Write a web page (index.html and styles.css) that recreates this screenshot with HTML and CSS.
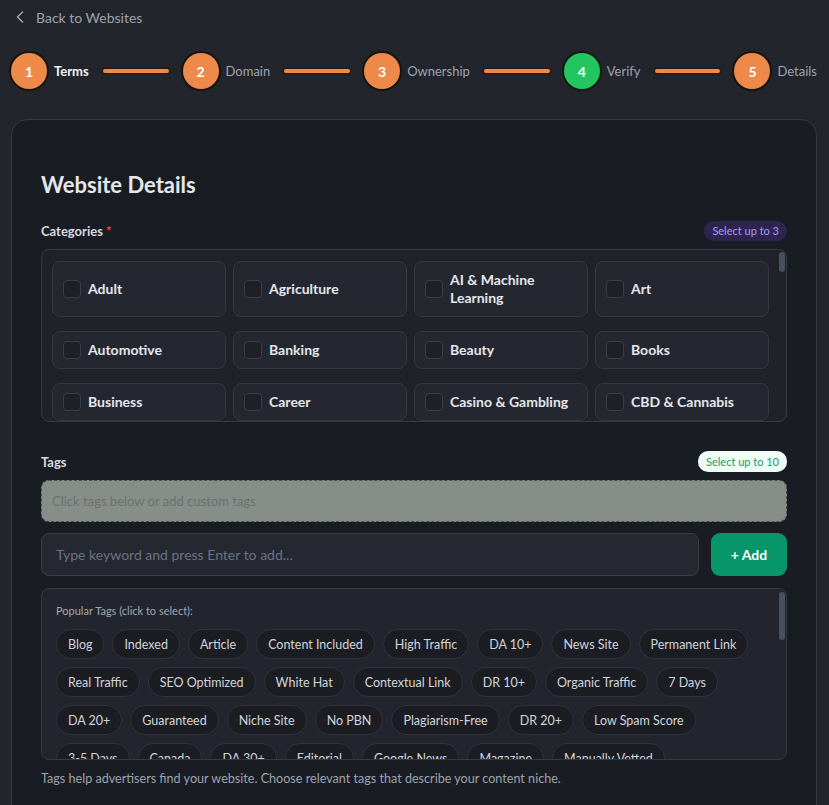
FILE: index.html
```html
<!DOCTYPE html>
<html lang="en">
<head>
    <meta charset="UTF-8">
    <meta name="viewport" content="width=device-width, initial-scale=1.0">
    <title>Website Details</title>
    <link rel="stylesheet" href="styles.css">
</head>
<body>
    <div class="page">
        <a class="back" href="#">
            <svg width="8" height="12" viewBox="0 0 8 12"><polyline points="6.5,1 1.5,6 6.5,11" fill="none" stroke="#9ca3af" stroke-width="1.6" stroke-linecap="round" stroke-linejoin="round"/></svg>
            <span>Back to Websites</span>
        </a>

        <div class="stepper">
            <div class="step active"><span class="dot">1</span><span class="label">Terms</span></div>
            <div class="line"></div>
            <div class="step"><span class="dot">2</span><span class="label">Domain</span></div>
            <div class="line"></div>
            <div class="step"><span class="dot">3</span><span class="label">Ownership</span></div>
            <div class="line"></div>
            <div class="step"><span class="dot green">4</span><span class="label">Verify</span></div>
            <div class="line"></div>
            <div class="step"><span class="dot">5</span><span class="label">Details</span></div>
        </div>

        <div class="card">
            <h1>Website Details</h1>

            <div class="field-head">
                <label>Categories <span class="req">*</span></label>
                <span class="badge purple">Select up to 3</span>
            </div>
            <div class="cat-box">
                <div class="cat-grid">
                    <label class="cat"><span class="check"></span>Adult</label>
                    <label class="cat"><span class="check"></span>Agriculture</label>
                    <label class="cat"><span class="check"></span>AI &amp; Machine Learning</label>
                    <label class="cat"><span class="check"></span>Art</label>
                    <label class="cat"><span class="check"></span>Automotive</label>
                    <label class="cat"><span class="check"></span>Banking</label>
                    <label class="cat"><span class="check"></span>Beauty</label>
                    <label class="cat"><span class="check"></span>Books</label>
                    <label class="cat"><span class="check"></span>Business</label>
                    <label class="cat"><span class="check"></span>Career</label>
                    <label class="cat"><span class="check"></span>Casino &amp; Gambling</label>
                    <label class="cat"><span class="check"></span>CBD &amp; Cannabis</label>
                    <label class="cat"><span class="check"></span>Education</label>
                    <label class="cat"><span class="check"></span>Entertainment</label>
                    <label class="cat"><span class="check"></span>Fashion</label>
                    <label class="cat"><span class="check"></span>Finance</label>
                </div>
                <div class="thumb cat-thumb"></div>
            </div>

            <div class="field-head tags-head">
                <label>Tags</label>
                <span class="badge green">Select up to 10</span>
            </div>
            <div class="drop">Click tags below or add custom tags</div>
            <div class="add-row">
                <input type="text" placeholder="Type keyword and press Enter to add...">
                <button>+ Add</button>
            </div>
            <div class="popular">
                <p class="pop-title">Popular Tags (click to select):</p>
                <div class="chips">
                    <span class="chip">Blog</span>
                    <span class="chip">Indexed</span>
                    <span class="chip">Article</span>
                    <span class="chip">Content Included</span>
                    <span class="chip">High Traffic</span>
                    <span class="chip">DA 10+</span>
                    <span class="chip">News Site</span>
                    <span class="chip">Permanent Link</span>
                    <span class="chip">Real Traffic</span>
                    <span class="chip">SEO Optimized</span>
                    <span class="chip">White Hat</span>
                    <span class="chip">Contextual Link</span>
                    <span class="chip">DR 10+</span>
                    <span class="chip">Organic Traffic</span>
                    <span class="chip">7 Days</span>
                    <span class="chip">DA 20+</span>
                    <span class="chip">Guaranteed</span>
                    <span class="chip">Niche Site</span>
                    <span class="chip">No PBN</span>
                    <span class="chip">Plagiarism-Free</span>
                    <span class="chip">DR 20+</span>
                    <span class="chip">Low Spam Score</span>
                    <span class="chip">3-5 Days</span>
                    <span class="chip">Canada</span>
                    <span class="chip">DA 30+</span>
                    <span class="chip">Editorial</span>
                    <span class="chip">Google News</span>
                    <span class="chip">Magazine</span>
                    <span class="chip">Manually Vetted</span>
                </div>
                <div class="thumb pop-thumb"></div>
            </div>
            <p class="help">Tags help advertisers find your website. Choose relevant tags that describe your content niche.</p>
        </div>
    </div>
</body>
</html>
```

FILE: styles.css
```css
* {
    box-sizing: border-box;
}
body {
    margin: 0;
    background-color: #22252c;
    font-family: Lato, "Open Sans", sans-serif;
    color: #e5e7eb;
}
.page {
    padding: 7px 12px 0 11px;
    height: 805px;
    overflow: hidden;
}

/* back link */
.back {
    display: flex;
    align-items: center;
    gap: 12px;
    height: 20px;
    padding-left: 5px;
    color: #9ca3af;
    font-size: 14px;
    text-decoration: none;
}

/* stepper */
.stepper {
    display: flex;
    align-items: center;
    margin-top: 26px;
}
.step {
    display: flex;
    align-items: center;
    gap: 7px;
}
.dot {
    width: 36px;
    height: 36px;
    border-radius: 50%;
    display: flex;
    justify-content: center;
    align-items: center;
    background-color: #ed8a4a;
    color: #fff;
    font-size: 14px;
    font-weight: 700;
    box-shadow: 0 0 0 2px #17130f;
}
.dot.green {
    background-color: #22c55e;
    box-shadow: 0 0 0 2px #0f1a13;
}
.step .label {
    font-size: 13px;
    color: #9ca3af;
}
.step.active .label {
    color: #f3f4f6;
    font-weight: 700;
}
.line {
    flex: 1;
    height: 4px;
    margin: 0 14px;
    border-radius: 2px;
    background-color: #ed8a4a;
    box-shadow: 0 0 0 2px #2a1c12;
}

/* card */
.card {
    margin-top: 30px;
    padding: 51px 29px 60px;
    background-color: #1a1c23;
    border: 1px solid #363941;
    border-radius: 16px;
}
.card h1 {
    margin: 0;
    font-size: 22px;
    line-height: 28px;
    font-weight: 700;
    color: #e5e7eb;
}
.field-head {
    display: flex;
    justify-content: space-between;
    align-items: center;
    margin-top: 22px;
    height: 20px;
}
.field-head label {
    font-size: 13px;
    font-weight: 700;
    color: #d7dae0;
}
.req {
    color: #ef4444;
}
.badge {
    font-size: 11px;
    line-height: 20px;
    padding: 0 8px;
    border-radius: 10px;
}
.badge.purple {
    background-color: #2d2550;
    color: #a99af5;
}
.badge.green {
    background-color: #f0fdf6;
    color: #139c70;
    line-height: 21px;
}

/* categories */
.cat-box {
    position: relative;
    margin-top: 8px;
    height: 173px;
    padding: 11px 0 0 10px;
    overflow: hidden;
    background-color: #1f2229;
    border: 1px solid #363941;
    border-radius: 8px;
}
.cat-grid {
    display: grid;
    grid-template-columns: repeat(4, 174px);
    column-gap: 7px;
    row-gap: 14px;
}
.cat {
    display: flex;
    align-items: center;
    gap: 7px;
    min-height: 38px;
    padding: 9px 10px;
    background-color: #242730;
    border: 1px solid #353841;
    border-radius: 8px;
    font-size: 14px;
    line-height: 18px;
    font-weight: 700;
    color: #e5e7eb;
}
.check {
    flex: none;
    width: 18px;
    height: 18px;
    border: 1px solid #3a3e47;
    border-radius: 4px;
    background-color: #1d2027;
}
.thumb {
    position: absolute;
    right: 1px;
    width: 6px;
    border-radius: 3px;
    background-color: #4a4f5c;
}
.cat-thumb {
    top: 2px;
    height: 20px;
}

/* tags */
.tags-head {
    margin-top: 29px;
    height: 21px;
}
.drop {
    margin-top: 8px;
    height: 42px;
    padding: 0 10px;
    display: flex;
    align-items: center;
    background-color: #878d89;
    border: 1px dashed #4d524f;
    border-radius: 8px;
    font-size: 13px;
    color: #6b726e;
}
.add-row {
    display: flex;
    gap: 12px;
    margin-top: 11px;
}
.add-row input {
    flex: 1;
    height: 43px;
    padding: 0 14px;
    background-color: #252830;
    border: 1px solid #3a3d46;
    border-radius: 8px;
    font-family: inherit;
    font-size: 14px;
    color: #e5e7eb;
    outline: none;
}
.add-row input::placeholder {
    color: #6b7280;
}
.add-row button {
    width: 76px;
    height: 43px;
    border: none;
    border-radius: 9px;
    background-color: #079669;
    color: #fff;
    font-family: inherit;
    font-size: 14px;
    font-weight: 700;
}
.popular {
    position: relative;
    margin-top: 12px;
    height: 172px;
    padding: 15px 14px 0;
    overflow: hidden;
    background-color: #22252d;
    border: 1px solid #363941;
    border-radius: 8px;
}
.pop-title {
    margin: 0 0 11px;
    font-size: 11px;
    line-height: 14px;
    color: #a3a8b2;
}
.chips {
    display: flex;
    flex-wrap: wrap;
    gap: 8px;
    padding-right: 16px;
}
.chip {
    height: 30px;
    padding: 0 11px;
    display: flex;
    align-items: center;
    background-color: #1b1d23;
    border: 1px solid #30333b;
    border-radius: 15px;
    font-size: 12.5px;
    color: #d1d5db;
}
.pop-thumb {
    top: 3px;
    height: 48px;
}
.help {
    margin: 10px 0 0;
    font-size: 12.6px;
    line-height: 18px;
    color: #9ca3af;
}
```
